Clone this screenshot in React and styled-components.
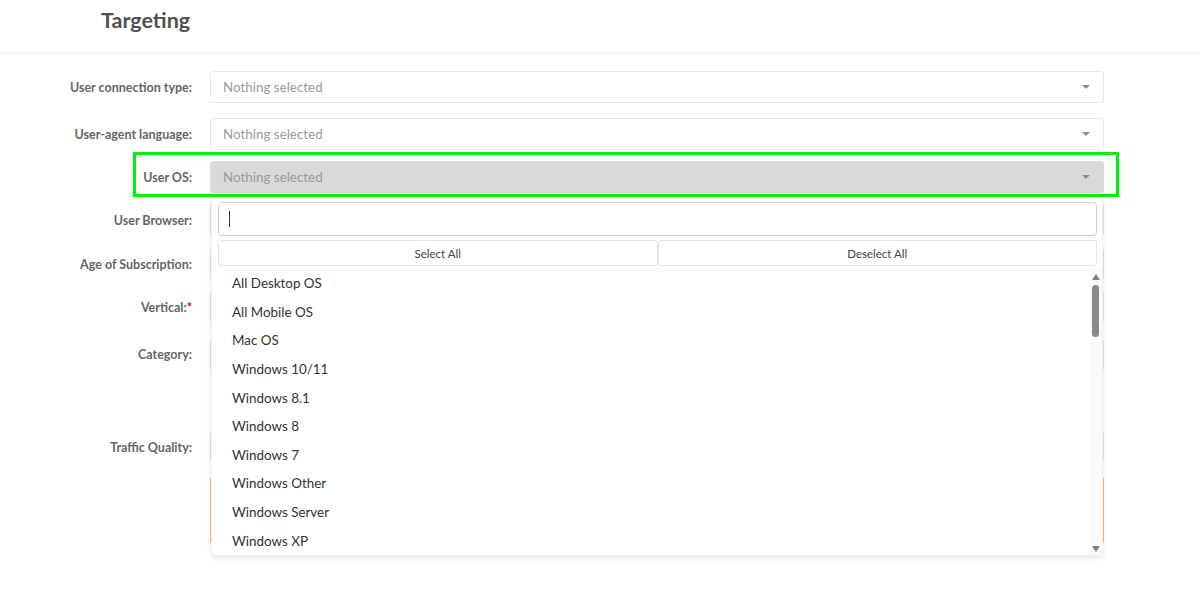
import React from 'react';
import styled, { createGlobalStyle } from 'styled-components';

const GlobalStyle = createGlobalStyle`
  html, body {
    margin: 0;
    padding: 0;
    background: #fff;
    font-family: Lato, "Open Sans", sans-serif;
  }
`;

const Page = styled.div`
  width: 1200px;
  height: 589px;
  overflow: hidden;
  background: #fff;
`;

const Header = styled.div`
  height: 53px;
  border-bottom: 1px solid #ececec;
  display: flex;
  align-items: center;
  padding-left: 101px;
  box-sizing: border-box;
`;

const Title = styled.h2`
  margin: 0 0 12px;
  font-size: 21.5px;
  font-weight: 700;
  color: #505050;
`;

const Form = styled.div`
  display: flex;
  flex-direction: column;
  padding-top: 18px;
`;

const Row = styled.div`
  position: relative;
  display: grid;
  grid-template-columns: 192px 894px;
  column-gap: 18px;
  align-items: center;
  margin-top: ${p => p.$gap || 0}px;
  min-height: ${p => p.$h || 32}px;
  z-index: ${p => (p.$open ? 5 : 1)};

  ${p => p.$highlight && `
    &::after {
      content: '';
      position: absolute;
      left: 133px;
      top: -9px;
      width: 986px;
      height: 45px;
      border: 3px solid #00f000;
      box-sizing: border-box;
      pointer-events: none;
    }
  `}
`;

const Label = styled.label`
  text-align: right;
  font-size: 12.5px;
  font-weight: 700;
  color: #666;
  align-self: ${p => (p.$top ? 'start' : 'center')};
  padding-top: ${p => (p.$top ? 8 : 0)}px;

  span {
    color: #e0001b;
  }
`;

const Select = styled.div`
  height: 32px;
  box-sizing: border-box;
  align-self: ${p => (p.$top ? 'start' : 'center')};
  border: 1px solid ${p => (p.$active ? '#d9d9d9' : '#e6e6e6')};
  border-radius: 3px;
  background: ${p => (p.$active ? '#d9d9d9' : '#fff')};
  display: flex;
  align-items: center;
  justify-content: space-between;
  padding: 0 13px 0 12px;
  font-size: 13.4px;
  color: #9a9a9a;
`;

const Caret = styled.i`
  width: 0;
  height: 0;
  margin-left: auto;
  border-left: 4px solid transparent;
  border-right: 4px solid transparent;
  border-top: 4px solid #8c8c8c;
`;

const Alert = styled.div`
  height: 68px;
  box-sizing: border-box;
  border: 1px solid #f2c27a;
  border-radius: 3px;
  background: #fff;
`;

const Menu = styled.div`
  position: absolute;
  left: 211px;
  top: 33px;
  width: 892px;
  height: 362px;
  background: #fff;
  border: 1px solid #f0f0f0;
  border-radius: 0 0 3px 3px;
  box-shadow: 0 2px 5px rgba(0, 0, 0, 0.1);
  box-sizing: border-box;
  display: flex;
  flex-direction: column;
`;

const MenuTop = styled.div`
  padding: 7px 5px 0 6px;
  display: flex;
  flex-direction: column;
  gap: 4px;
`;

const Search = styled.div`
  height: 34px;
  border: 1px solid #cfcfcf;
  border-radius: 4px;
  box-sizing: border-box;
  display: flex;
  align-items: center;
  padding-left: 10px;

  &::before {
    content: '';
    width: 1px;
    height: 16px;
    background: #333;
  }
`;

const Actions = styled.div`
  display: grid;
  grid-template-columns: 1fr 1fr;
  height: 26px;
`;

const ActionButton = styled.button`
  border: 1px solid #e4e4e4;
  border-radius: 3px;
  background: #fff;
  font-family: Lato, "Open Sans", sans-serif;
  font-size: 11.5px;
  color: #444;
  padding: 0;
`;

const ListWrap = styled.div`
  flex: 1;
  display: flex;
  margin-top: 3px;
  min-height: 0;
`;

const List = styled.ul`
  flex: 1;
  margin: 0;
  padding: 0;
  list-style: none;
`;

const Item = styled.li`
  height: 28.6px;
  display: flex;
  align-items: center;
  padding-left: 20px;
  font-size: 13.4px;
  color: #333;
`;

const Scrollbar = styled.div`
  width: 13px;
  background: #fafafa;
  display: flex;
  flex-direction: column;
  align-items: center;
  padding: 5px 0 3px;
  box-sizing: border-box;
`;

const Arrow = styled.i`
  width: 0;
  height: 0;
  border-left: 4px solid transparent;
  border-right: 4px solid transparent;
  ${p => (p.$down ? 'border-top: 6px solid #808080;' : 'border-bottom: 6px solid #808080;')}
  ${p => p.$down && 'margin-top: auto;'}
`;

const Thumb = styled.div`
  width: 7px;
  height: 52px;
  margin-top: 5px;
  border-radius: 4px;
  background: #8a8a8a;
`;

const osList = [
  'All Desktop OS',
  'All Mobile OS',
  'Mac OS',
  'Windows 10/11',
  'Windows 8.1',
  'Windows 8',
  'Windows 7',
  'Windows Other',
  'Windows Server',
  'Windows XP',
];

// rows that sit under the open menu: only their left edge shows
const hiddenRows = [
  { label: 'User Browser:', gap: 11 },
  { label: 'Age of Subscription:', gap: 12 },
  { label: 'Vertical:', gap: 11, required: true },
  { label: 'Category:', gap: 16, h: 76, top: true },
  { label: 'Traffic Quality:', gap: 16 },
];

const App = () => (
  <Page>
    <GlobalStyle />
    <Header>
      <Title>Targeting</Title>
    </Header>
    <Form>
      <Row>
        <Label>User connection type:</Label>
        <Select>Nothing selected<Caret /></Select>
      </Row>
      <Row $gap={15}>
        <Label>User-agent language:</Label>
        <Select>Nothing selected<Caret /></Select>
      </Row>
      <Row $gap={11} $highlight $open>
        <Label>User OS:</Label>
        <Select $active>Nothing selected<Caret /></Select>
        <Menu>
          <MenuTop>
            <Search />
            <Actions>
              <ActionButton>Select All</ActionButton>
              <ActionButton>Deselect All</ActionButton>
            </Actions>
          </MenuTop>
          <ListWrap>
            <List>
              {osList.map(os => <Item key={os}>{os}</Item>)}
            </List>
            <Scrollbar>
              <Arrow />
              <Thumb />
              <Arrow $down />
            </Scrollbar>
          </ListWrap>
        </Menu>
      </Row>
      {hiddenRows.map(r => (
        <Row key={r.label} $gap={r.gap} $h={r.h}>
          <Label $top={r.top}>
            {r.label}
            {r.required && <span>*</span>}
          </Label>
          <Select $top={r.top}><Caret /></Select>
        </Row>
      ))}
      <Row $gap={13} $h={68}>
        <div />
        <Alert />
      </Row>
    </Form>
  </Page>
);

export default App;
